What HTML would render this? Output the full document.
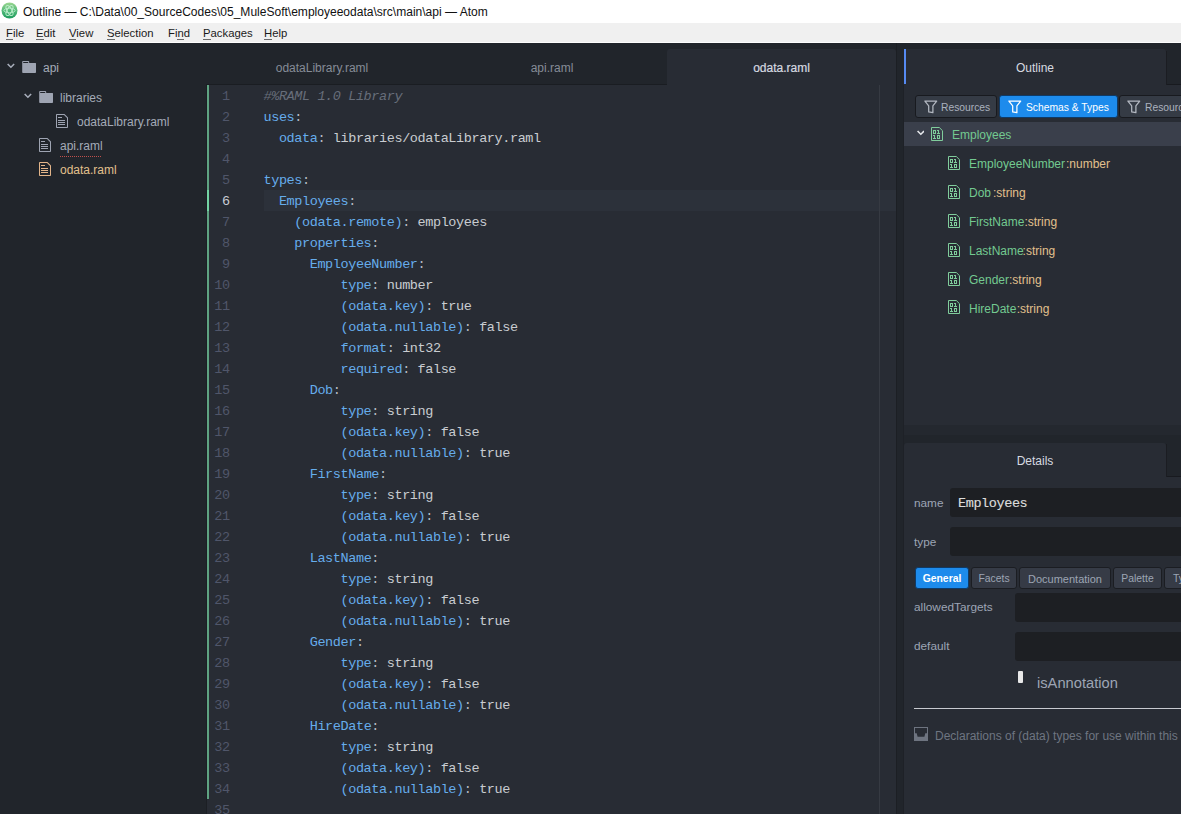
<!DOCTYPE html>
<html><head><meta charset="utf-8">
<style>
*{box-sizing:border-box;margin:0;padding:0}
html,body{width:1181px;height:814px;overflow:hidden;background:#21252b;font-family:"Liberation Sans",sans-serif}
.a{position:absolute;white-space:pre}
#titlebar{position:absolute;left:0;top:0;width:1181px;height:23px;background:#ffffff}
#menubar{position:absolute;left:0;top:23px;width:1181px;height:20px;background:#f0f0f0;border-bottom:1px solid #fdfdfd}
#tree{position:absolute;left:0;top:43px;width:206px;height:771px;background:#21252b}
#tabbar{position:absolute;left:207px;top:43px;width:689px;height:42px;background:#21252b}
#editor{position:absolute;left:207px;top:85px;width:689px;height:729px;background:#282c34;overflow:hidden}
#gap{position:absolute;left:896px;top:43px;width:8px;height:771px;background:#21252b}
#dock{position:absolute;left:904px;top:43px;width:277px;height:771px;background:#21252b;overflow:hidden}
.mi{top:2px;font-size:11.3px;line-height:16px;color:#1a1a1a}
.mi u{text-decoration:none;border-bottom:1px solid #6a6a6a}
.tv{font-size:12px;line-height:16px;color:#a4abb8}
.tb{font-size:12px;line-height:16px;color:#868c97;text-align:center}
.ln{position:absolute;left:56.5px;height:21px;line-height:21px;padding-top:1px;white-space:pre;font-family:"Liberation Mono",monospace;font-size:13.5px;letter-spacing:-0.4px;color:#c5c8ce}
.gn{position:absolute;left:0;width:22.6px;height:21px;line-height:21px;padding-top:1px;text-align:right;font-family:"Liberation Mono",monospace;font-size:13.5px;letter-spacing:-0.4px;color:#50566a}
.gcur{color:#c8ccd4}
.cm{color:#676e7a;font-style:italic}
.ky{color:#66adec}
.pu{color:#b4b9c2}
.vl{color:#c9ccd1}
.dt{font-size:12px;line-height:16px;color:#d7dae0;text-align:center}
.btn{height:23px;background:#353b45;border:1px solid #181a1f;border-radius:3px}
.btn.sel{background:#1d8bec;border-color:#0f3a66}
.bt{font-size:10.3px;line-height:14px;color:#abb2bf}
.ot{font-size:12px;line-height:16px;color:#73c990}
.otp{color:#e2c08d}
.lb{font-size:11.8px;line-height:16px;color:#9da5b4}
.inp{background:#1d1f23;border-radius:3px}
.nm{font-family:"Liberation Mono",monospace;font-size:13.5px;letter-spacing:-0.4px;line-height:18px;color:#dcdcdc;-webkit-text-stroke:0.15px #dcdcdc}
.btn2{height:22px;background:#363b46;border:1px solid #1b1d22;border-radius:3px;font-size:10.4px;line-height:20px;padding-top:1px;color:#9da5b4;text-align:center}
.btn2.sel{background:#1d8bec;border-color:#0f3a66;color:#fff;font-weight:bold}
.code{font-family:"Liberation Mono",monospace;font-size:13.5px;letter-spacing:-0.4px}
</style></head><body>
<div id="titlebar">
<svg class="a" style="left:1.4px;top:2.3px" width="17" height="17" viewBox="0 0 17 17"><defs><linearGradient id="ag" x1="0" y1="0" x2="0" y2="1"><stop offset="0" stop-color="#9bd690"/><stop offset="0.55" stop-color="#4fb878"/><stop offset="1" stop-color="#1c9a5c"/></linearGradient></defs><circle cx="8.5" cy="8.5" r="8" fill="url(#ag)"/><g fill="none" stroke="#c8f5d6" stroke-width="1" opacity="0.85"><ellipse cx="8.5" cy="8.5" rx="5.6" ry="2.3"/><ellipse cx="8.5" cy="8.5" rx="5.6" ry="2.3" transform="rotate(60 8.5 8.5)"/><ellipse cx="8.5" cy="8.5" rx="5.6" ry="2.3" transform="rotate(-60 8.5 8.5)"/></g></svg>
<div class="a" style="left:23px;top:4px;font-size:12.04px;line-height:16px;color:#111">Outline — C:\Data\00_SourceCodes\05_MuleSoft\employeeodata\src\main\api — Atom</div>
</div>
<div id="menubar">
<div class="a mi" style="left:6px"><u>F</u>ile</div>
<div class="a mi" style="left:36px"><u>E</u>dit</div>
<div class="a mi" style="left:69px"><u>V</u>iew</div>
<div class="a mi" style="left:107px"><u>S</u>election</div>
<div class="a mi" style="left:168px">Fi<u>n</u>d</div>
<div class="a mi" style="left:203px"><u>P</u>ackages</div>
<div class="a mi" style="left:264px"><u>H</u>elp</div>
</div>
<div id="tree">
<svg class="a" style="left:7.4px;top:17.2px" width="7.8" height="12.16" viewBox="0 0 10 16" fill="#a8aebb"><path d="M5 11L0 6l1.5-1.5L5 8.25 8.5 4.5 10 6l-5 5z"/></svg>
<svg class="a" style="left:22px;top:16px" width="14.4" height="16" viewBox="0 0 14 16" fill="#9ea4b2"><path d="M13 4H7V3c0-.66-.31-1-1-1H1c-.55 0-1 .45-1 1v10c0 .55.45 1 1 1h12c.55 0 1-.45 1-1V5c0-.55-.45-1-1-1zM6 4H1V3h5v1z"/></svg>
<div class="a tv" style="left:43px;top:17px">api</div>
<svg class="a" style="left:24.2px;top:47.2px" width="7.8" height="12.16" viewBox="0 0 10 16" fill="#a8aebb"><path d="M5 11L0 6l1.5-1.5L5 8.25 8.5 4.5 10 6l-5 5z"/></svg>
<svg class="a" style="left:39px;top:46px" width="14.4" height="16" viewBox="0 0 14 16" fill="#9ea4b2"><path d="M13 4H7V3c0-.66-.31-1-1-1H1c-.55 0-1 .45-1 1v10c0 .55.45 1 1 1h12c.55 0 1-.45 1-1V5c0-.55-.45-1-1-1zM6 4H1V3h5v1z"/></svg>
<div class="a tv" style="left:60px;top:47px">libraries</div>
<svg class="a" style="left:56px;top:70px" width="12" height="16" viewBox="0 0 12 16" fill="#9ea4b2"><path d="M6 5H2V4h4v1zM2 8h7V7H2v1zm0 2h7V9H2v1zm0 2h7v-1H2v1zm10-7.5V14c0 .55-.45 1-1 1H1c-.55 0-1-.45-1-1V2c0-.55.45-1 1-1h7.5L12 4.5zM11 5L8 2H1v12h10V5z"/></svg>
<div class="a tv" style="left:77px;top:71px">odataLibrary.raml</div>
<svg class="a" style="left:39px;top:94px" width="12" height="16" viewBox="0 0 12 16" fill="#9ea4b2"><path d="M6 5H2V4h4v1zM2 8h7V7H2v1zm0 2h7V9H2v1zm0 2h7v-1H2v1zm10-7.5V14c0 .55-.45 1-1 1H1c-.55 0-1-.45-1-1V2c0-.55.45-1 1-1h7.5L12 4.5zM11 5L8 2H1v12h10V5z"/></svg>
<div class="a tv" style="left:60px;top:95px">api.raml</div>
<div class="a" style="left:60px;top:113px;width:42px;height:1px;background-image:linear-gradient(to right,#c0504d 50%,transparent 50%);background-size:2px 1px"></div>
<svg class="a" style="left:39px;top:118px" width="12" height="16" viewBox="0 0 12 16" fill="#e2b58a"><path d="M6 5H2V4h4v1zM2 8h7V7H2v1zm0 2h7V9H2v1zm0 2h7v-1H2v1zm10-7.5V14c0 .55-.45 1-1 1H1c-.55 0-1-.45-1-1V2c0-.55.45-1 1-1h7.5L12 4.5zM11 5L8 2H1v12h10V5z"/></svg>
<div class="a tv" style="left:60px;top:119px;color:#e2c08d">odata.raml</div>
</div>
<div id="tabbar">
<div class="a tb" style="left:0;width:230px;top:17px">odataLibrary.raml</div>
<div class="a tb" style="left:230px;width:230px;top:17px">api.raml</div>
<div class="a" style="left:460px;top:6px;width:229px;height:36px;background:#282c34;border-radius:3px 3px 0 0"></div>
<div class="a tb" style="left:460px;width:229px;top:17px;color:#d7dae0;-webkit-text-stroke:0.2px #d7dae0">odata.raml</div>
</div>
<div id="editor">
<div class="a" style="left:0;top:0;width:2px;height:714px;background:#5fa382"></div>
<div class="a" style="left:57px;top:105px;width:632px;height:21px;background:#2c313a"></div>
<div class="a" style="left:0;top:105px;width:2px;height:21px;background:#73d3a3"></div>
<div class="a" style="left:672px;top:0;width:1px;height:729px;background:#363a42"></div>
<div class="ln" style="top:0px"><span class="cm">#%RAML 1.0 Library</span></div>
<div class="gn" style="top:0px">1</div>
<div class="ln" style="top:21px"><span class="ky">uses</span><span class="pu">:</span></div>
<div class="gn" style="top:21px">2</div>
<div class="ln" style="top:42px">  <span class="ky">odata</span><span class="pu">:</span> <span class="vl">libraries/odataLibrary.raml</span></div>
<div class="gn" style="top:42px">3</div>
<div class="ln" style="top:63px"></div>
<div class="gn" style="top:63px">4</div>
<div class="ln" style="top:84px"><span class="ky">types</span><span class="pu">:</span></div>
<div class="gn" style="top:84px">5</div>
<div class="ln cur" style="top:105px">  <span class="ky">Employees</span><span class="pu">:</span></div>
<div class="gn gcur" style="top:105px">6</div>
<div class="ln" style="top:126px">    <span class="ky">(odata.remote)</span><span class="pu">:</span> <span class="vl">employees</span></div>
<div class="gn" style="top:126px">7</div>
<div class="ln" style="top:147px">    <span class="ky">properties</span><span class="pu">:</span></div>
<div class="gn" style="top:147px">8</div>
<div class="ln" style="top:168px">      <span class="ky">EmployeeNumber</span><span class="pu">:</span></div>
<div class="gn" style="top:168px">9</div>
<div class="ln" style="top:189px">          <span class="ky">type</span><span class="pu">:</span> <span class="vl">number</span></div>
<div class="gn" style="top:189px">10</div>
<div class="ln" style="top:210px">          <span class="ky">(odata.key)</span><span class="pu">:</span> <span class="vl">true</span></div>
<div class="gn" style="top:210px">11</div>
<div class="ln" style="top:231px">          <span class="ky">(odata.nullable)</span><span class="pu">:</span> <span class="vl">false</span></div>
<div class="gn" style="top:231px">12</div>
<div class="ln" style="top:252px">          <span class="ky">format</span><span class="pu">:</span> <span class="vl">int32</span></div>
<div class="gn" style="top:252px">13</div>
<div class="ln" style="top:273px">          <span class="ky">required</span><span class="pu">:</span> <span class="vl">false</span></div>
<div class="gn" style="top:273px">14</div>
<div class="ln" style="top:294px">      <span class="ky">Dob</span><span class="pu">:</span></div>
<div class="gn" style="top:294px">15</div>
<div class="ln" style="top:315px">          <span class="ky">type</span><span class="pu">:</span> <span class="vl">string</span></div>
<div class="gn" style="top:315px">16</div>
<div class="ln" style="top:336px">          <span class="ky">(odata.key)</span><span class="pu">:</span> <span class="vl">false</span></div>
<div class="gn" style="top:336px">17</div>
<div class="ln" style="top:357px">          <span class="ky">(odata.nullable)</span><span class="pu">:</span> <span class="vl">true</span></div>
<div class="gn" style="top:357px">18</div>
<div class="ln" style="top:378px">      <span class="ky">FirstName</span><span class="pu">:</span></div>
<div class="gn" style="top:378px">19</div>
<div class="ln" style="top:399px">          <span class="ky">type</span><span class="pu">:</span> <span class="vl">string</span></div>
<div class="gn" style="top:399px">20</div>
<div class="ln" style="top:420px">          <span class="ky">(odata.key)</span><span class="pu">:</span> <span class="vl">false</span></div>
<div class="gn" style="top:420px">21</div>
<div class="ln" style="top:441px">          <span class="ky">(odata.nullable)</span><span class="pu">:</span> <span class="vl">true</span></div>
<div class="gn" style="top:441px">22</div>
<div class="ln" style="top:462px">      <span class="ky">LastName</span><span class="pu">:</span></div>
<div class="gn" style="top:462px">23</div>
<div class="ln" style="top:483px">          <span class="ky">type</span><span class="pu">:</span> <span class="vl">string</span></div>
<div class="gn" style="top:483px">24</div>
<div class="ln" style="top:504px">          <span class="ky">(odata.key)</span><span class="pu">:</span> <span class="vl">false</span></div>
<div class="gn" style="top:504px">25</div>
<div class="ln" style="top:525px">          <span class="ky">(odata.nullable)</span><span class="pu">:</span> <span class="vl">true</span></div>
<div class="gn" style="top:525px">26</div>
<div class="ln" style="top:546px">      <span class="ky">Gender</span><span class="pu">:</span></div>
<div class="gn" style="top:546px">27</div>
<div class="ln" style="top:567px">          <span class="ky">type</span><span class="pu">:</span> <span class="vl">string</span></div>
<div class="gn" style="top:567px">28</div>
<div class="ln" style="top:588px">          <span class="ky">(odata.key)</span><span class="pu">:</span> <span class="vl">false</span></div>
<div class="gn" style="top:588px">29</div>
<div class="ln" style="top:609px">          <span class="ky">(odata.nullable)</span><span class="pu">:</span> <span class="vl">true</span></div>
<div class="gn" style="top:609px">30</div>
<div class="ln" style="top:630px">      <span class="ky">HireDate</span><span class="pu">:</span></div>
<div class="gn" style="top:630px">31</div>
<div class="ln" style="top:651px">          <span class="ky">type</span><span class="pu">:</span> <span class="vl">string</span></div>
<div class="gn" style="top:651px">32</div>
<div class="ln" style="top:672px">          <span class="ky">(odata.key)</span><span class="pu">:</span> <span class="vl">false</span></div>
<div class="gn" style="top:672px">33</div>
<div class="ln" style="top:693px">          <span class="ky">(odata.nullable)</span><span class="pu">:</span> <span class="vl">true</span></div>
<div class="gn" style="top:693px">34</div>
<div class="ln" style="top:714px"></div>
<div class="gn" style="top:714px">35</div>
</div>
<div id="gap"></div>
<div class="a" style="left:206px;top:84px;width:461px;height:1px;background:#1a1d22"></div>
<div class="a" style="left:206px;top:85px;width:1px;height:729px;background:#1c1f24"></div>
<div class="a" style="left:896px;top:43px;width:1px;height:771px;background:#1c1f24"></div>
<div class="a" style="left:903px;top:85px;width:1px;height:729px;background:#1e2127"></div>
<div class="a" style="left:904px;top:434px;width:277px;height:1px;background:#1c1f24"></div>
<div id="dock">
<div class="a" style="left:0px;top:6px;width:262px;height:36px;background:#282c34;border-radius:0 3px 0 0"></div>
<div class="a" style="left:262px;top:41px;width:15px;height:1px;background:#181a1f"></div>
<div class="a" style="left:262px;top:8px;width:1px;height:34px;background:#1b1d22"></div>
<div class="a" style="left:0px;top:6px;width:2px;height:35px;background:#568af2"></div>
<div class="a dt" style="left:0px;top:17px;width:262px">Outline</div>
<div class="a" style="left:0px;top:42px;width:277px;height:340px;background:#282c34"></div>
<div class="a btn" style="left:11px;top:52px;width:82px"></div>
<svg class="a" style="left:20px;top:57px" width="14" height="14" viewBox="0 0 14 14"><path d="M0.9 1.1H12.7L8.9 5.8V12.7L4.7 11.9V5.8Z" fill="none" stroke="#b3b8c1" stroke-width="1.25" stroke-linejoin="round"/></svg>
<div class="a bt" style="left:37px;top:58px">Resources</div>
<div class="a btn sel" style="left:95px;top:52px;width:119px"></div>
<svg class="a" style="left:104px;top:57px" width="14" height="14" viewBox="0 0 14 14"><path d="M0.9 1.1H12.7L8.9 5.8V12.7L4.7 11.9V5.8Z" fill="none" stroke="#ffffff" stroke-width="1.25" stroke-linejoin="round"/></svg>
<div class="a bt" style="left:122px;top:58px;color:#fff">Schemas &amp; Types</div>
<div class="a btn" style="left:215px;top:52px;width:90px"></div>
<svg class="a" style="left:223px;top:57px" width="14" height="14" viewBox="0 0 14 14"><path d="M0.9 1.1H12.7L8.9 5.8V12.7L4.7 11.9V5.8Z" fill="none" stroke="#b3b8c1" stroke-width="1.25" stroke-linejoin="round"/></svg>
<div class="a bt" style="left:241px;top:58px">Resources</div>
<div class="a" style="left:0px;top:79px;width:277px;height:24px;background:#3a3f4b"></div>
<svg class="a" style="left:12.5px;top:84px" width="7.6" height="12.16" viewBox="0 0 10 16" fill="#e6e8ec"><path d="M5 11L0 6l1.5-1.5L5 8.25 8.5 4.5 10 6l-5 5z"/></svg>
<svg class="a" style="left:27px;top:84px" width="12" height="14" viewBox="0 0 12 14"><path d="M0.5 0.5H8.3L11.5 3.7V13.5H0.5Z" fill="none" stroke="#80cd9c" stroke-width="1"/><g fill="#80cd9c" shape-rendering="crispEdges"><rect x="2" y="3" width="3" height="1"/><rect x="2" y="6" width="3" height="1"/><rect x="2" y="4" width="1" height="2"/><rect x="4" y="4" width="1" height="2"/><rect x="7" y="3" width="1" height="4"/><rect x="6" y="3" width="1" height="1"/><rect x="6" y="6" width="3" height="1"/><rect x="3" y="8" width="1" height="4"/><rect x="2" y="8" width="1" height="1"/><rect x="2" y="11" width="3" height="1"/><rect x="6" y="8" width="3" height="1"/><rect x="6" y="11" width="3" height="1"/><rect x="6" y="9" width="1" height="2"/><rect x="8" y="9" width="1" height="2"/></g></svg>
<div class="a ot" style="left:48px;top:84px">Employees</div>
<svg class="a" style="left:44px;top:113px" width="12" height="14" viewBox="0 0 12 14"><path d="M0.5 0.5H8.3L11.5 3.7V13.5H0.5Z" fill="none" stroke="#80cd9c" stroke-width="1"/><g fill="#80cd9c" shape-rendering="crispEdges"><rect x="2" y="3" width="3" height="1"/><rect x="2" y="6" width="3" height="1"/><rect x="2" y="4" width="1" height="2"/><rect x="4" y="4" width="1" height="2"/><rect x="7" y="3" width="1" height="4"/><rect x="6" y="3" width="1" height="1"/><rect x="6" y="6" width="3" height="1"/><rect x="3" y="8" width="1" height="4"/><rect x="2" y="8" width="1" height="1"/><rect x="2" y="11" width="3" height="1"/><rect x="6" y="8" width="3" height="1"/><rect x="6" y="11" width="3" height="1"/><rect x="6" y="9" width="1" height="2"/><rect x="8" y="9" width="1" height="2"/></g></svg>
<div class="a ot" style="left:65px;top:113px">EmployeeNumber</div><div class="a ot otp" style="left:162px;top:113px">:number</div>
<svg class="a" style="left:44px;top:142px" width="12" height="14" viewBox="0 0 12 14"><path d="M0.5 0.5H8.3L11.5 3.7V13.5H0.5Z" fill="none" stroke="#80cd9c" stroke-width="1"/><g fill="#80cd9c" shape-rendering="crispEdges"><rect x="2" y="3" width="3" height="1"/><rect x="2" y="6" width="3" height="1"/><rect x="2" y="4" width="1" height="2"/><rect x="4" y="4" width="1" height="2"/><rect x="7" y="3" width="1" height="4"/><rect x="6" y="3" width="1" height="1"/><rect x="6" y="6" width="3" height="1"/><rect x="3" y="8" width="1" height="4"/><rect x="2" y="8" width="1" height="1"/><rect x="2" y="11" width="3" height="1"/><rect x="6" y="8" width="3" height="1"/><rect x="6" y="11" width="3" height="1"/><rect x="6" y="9" width="1" height="2"/><rect x="8" y="9" width="1" height="2"/></g></svg>
<div class="a ot" style="left:65px;top:142px">Dob</div><div class="a ot otp" style="left:89px;top:142px">:string</div>
<svg class="a" style="left:44px;top:171px" width="12" height="14" viewBox="0 0 12 14"><path d="M0.5 0.5H8.3L11.5 3.7V13.5H0.5Z" fill="none" stroke="#80cd9c" stroke-width="1"/><g fill="#80cd9c" shape-rendering="crispEdges"><rect x="2" y="3" width="3" height="1"/><rect x="2" y="6" width="3" height="1"/><rect x="2" y="4" width="1" height="2"/><rect x="4" y="4" width="1" height="2"/><rect x="7" y="3" width="1" height="4"/><rect x="6" y="3" width="1" height="1"/><rect x="6" y="6" width="3" height="1"/><rect x="3" y="8" width="1" height="4"/><rect x="2" y="8" width="1" height="1"/><rect x="2" y="11" width="3" height="1"/><rect x="6" y="8" width="3" height="1"/><rect x="6" y="11" width="3" height="1"/><rect x="6" y="9" width="1" height="2"/><rect x="8" y="9" width="1" height="2"/></g></svg>
<div class="a ot" style="left:65px;top:171px">FirstName</div><div class="a ot otp" style="left:120.40000000000009px;top:171px">:string</div>
<svg class="a" style="left:44px;top:200px" width="12" height="14" viewBox="0 0 12 14"><path d="M0.5 0.5H8.3L11.5 3.7V13.5H0.5Z" fill="none" stroke="#80cd9c" stroke-width="1"/><g fill="#80cd9c" shape-rendering="crispEdges"><rect x="2" y="3" width="3" height="1"/><rect x="2" y="6" width="3" height="1"/><rect x="2" y="4" width="1" height="2"/><rect x="4" y="4" width="1" height="2"/><rect x="7" y="3" width="1" height="4"/><rect x="6" y="3" width="1" height="1"/><rect x="6" y="6" width="3" height="1"/><rect x="3" y="8" width="1" height="4"/><rect x="2" y="8" width="1" height="1"/><rect x="2" y="11" width="3" height="1"/><rect x="6" y="8" width="3" height="1"/><rect x="6" y="11" width="3" height="1"/><rect x="6" y="9" width="1" height="2"/><rect x="8" y="9" width="1" height="2"/></g></svg>
<div class="a ot" style="left:65px;top:200px">LastName</div><div class="a ot otp" style="left:118.60000000000002px;top:200px">:string</div>
<svg class="a" style="left:44px;top:229px" width="12" height="14" viewBox="0 0 12 14"><path d="M0.5 0.5H8.3L11.5 3.7V13.5H0.5Z" fill="none" stroke="#80cd9c" stroke-width="1"/><g fill="#80cd9c" shape-rendering="crispEdges"><rect x="2" y="3" width="3" height="1"/><rect x="2" y="6" width="3" height="1"/><rect x="2" y="4" width="1" height="2"/><rect x="4" y="4" width="1" height="2"/><rect x="7" y="3" width="1" height="4"/><rect x="6" y="3" width="1" height="1"/><rect x="6" y="6" width="3" height="1"/><rect x="3" y="8" width="1" height="4"/><rect x="2" y="8" width="1" height="1"/><rect x="2" y="11" width="3" height="1"/><rect x="6" y="8" width="3" height="1"/><rect x="6" y="11" width="3" height="1"/><rect x="6" y="9" width="1" height="2"/><rect x="8" y="9" width="1" height="2"/></g></svg>
<div class="a ot" style="left:65px;top:229px">Gender</div><div class="a ot otp" style="left:105px;top:229px">:string</div>
<svg class="a" style="left:44px;top:257px" width="12" height="14" viewBox="0 0 12 14"><path d="M0.5 0.5H8.3L11.5 3.7V13.5H0.5Z" fill="none" stroke="#80cd9c" stroke-width="1"/><g fill="#80cd9c" shape-rendering="crispEdges"><rect x="2" y="3" width="3" height="1"/><rect x="2" y="6" width="3" height="1"/><rect x="2" y="4" width="1" height="2"/><rect x="4" y="4" width="1" height="2"/><rect x="7" y="3" width="1" height="4"/><rect x="6" y="3" width="1" height="1"/><rect x="6" y="6" width="3" height="1"/><rect x="3" y="8" width="1" height="4"/><rect x="2" y="8" width="1" height="1"/><rect x="2" y="11" width="3" height="1"/><rect x="6" y="8" width="3" height="1"/><rect x="6" y="11" width="3" height="1"/><rect x="6" y="9" width="1" height="2"/><rect x="8" y="9" width="1" height="2"/></g></svg>
<div class="a ot" style="left:65px;top:258px">HireDate</div><div class="a ot otp" style="left:112.70000000000005px;top:258px">:string</div>
<div class="a" style="left:0px;top:382px;width:277px;height:10px;background:#24282f"></div>
<div class="a" style="left:0px;top:400px;width:262px;height:34px;background:#282c34;border-radius:3px 3px 0 0"></div>
<div class="a" style="left:262px;top:433px;width:15px;height:1px;background:#181a1f"></div>
<div class="a" style="left:262px;top:401px;width:1px;height:33px;background:#1b1d22"></div>
<div class="a dt" style="left:0px;top:410px;width:262px">Details</div>
<div class="a" style="left:0px;top:434px;width:277px;height:337px;background:#282c34"></div>
<div class="a lb" style="left:10px;top:452px">name</div>
<div class="a inp" style="left:46px;top:445px;width:240px;height:29px"></div>
<div class="a nm" style="left:54px;top:452px">Employees</div>
<div class="a lb" style="left:10px;top:491px">type</div>
<div class="a inp" style="left:46px;top:484px;width:240px;height:29px"></div>
<div class="a btn2 sel" style="left:11px;top:524px;width:54px"><span>General</span></div>
<div class="a btn2" style="left:67px;top:524px;width:46px"><span>Facets</span></div>
<div class="a btn2" style="left:115px;top:524px;width:92px"><span style="font-size:11px">Documentation</span></div>
<div class="a btn2" style="left:209px;top:524px;width:49px"><span>Palette</span></div>
<div class="a btn2" style="left:260px;top:524px;width:76px"><span style="position:absolute;left:8px">Type</span></div>
<div class="a lb" style="left:10px;top:556px">allowedTargets</div>
<div class="a inp" style="left:111px;top:550px;width:200px;height:29px"></div>
<div class="a lb" style="left:10px;top:595px">default</div>
<div class="a inp" style="left:111px;top:589px;width:200px;height:29px"></div>
<div class="a" style="left:114px;top:628px;width:5px;height:12px;background:#e8e8e8;border-radius:1px"></div>
<div class="a" style="left:133px;top:631px;font-size:14.7px;line-height:18px;color:#9da5b4">isAnnotation</div>
<div class="a" style="left:10px;top:665px;width:267px;height:1px;background:#c8cad0"></div>
<svg class="a" style="left:10px;top:684px" width="14" height="14" viewBox="0 0 14 14"><path fill-rule="evenodd" fill="#6e7480" d="M0 0H14V14H0ZM1 1V6.3H2.7L3.6 9.8H10.4L11.3 6.3H13V1Z"/></svg>
<div class="a" style="left:31px;top:685px;font-size:12px;line-height:16px;color:#6e7581">Declarations of (data) types for use within this</div>
</div>
</body></html>
